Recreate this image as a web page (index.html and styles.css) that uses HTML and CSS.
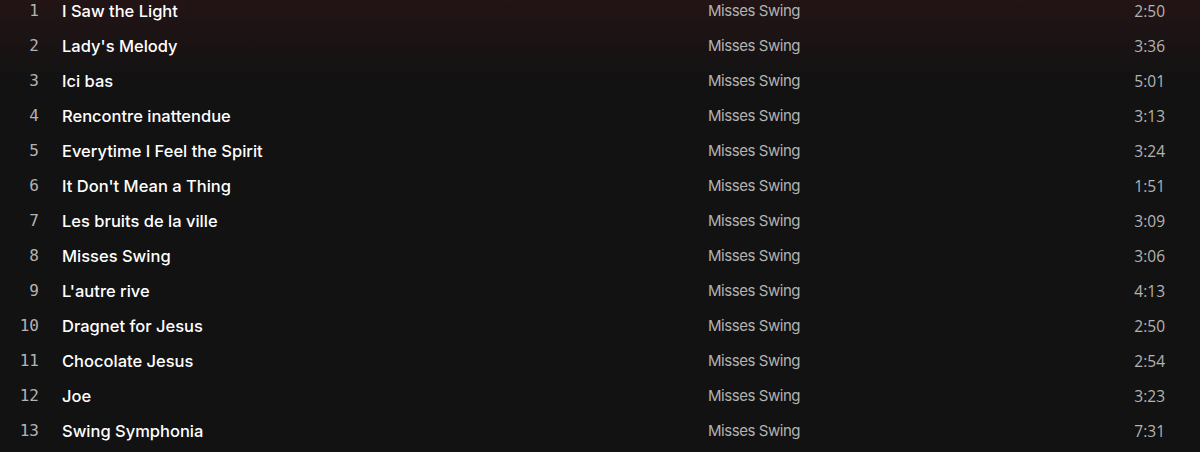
FILE: index.html
```html
<!DOCTYPE html>
<html lang="en">
<head>
<meta charset="utf-8">
<title>Tracklist</title>
<link rel="stylesheet" href="styles.css">
</head>
<body>
<main class="page">
  <ol class="tracklist">
    <li class="row"><span class="num">1</span><span class="title">I Saw the Light</span><span class="artist">Misses Swing</span><span class="dur">2:50</span></li>
    <li class="row"><span class="num">2</span><span class="title">Lady's Melody</span><span class="artist">Misses Swing</span><span class="dur">3:36</span></li>
    <li class="row"><span class="num">3</span><span class="title">Ici bas</span><span class="artist">Misses Swing</span><span class="dur">5:01</span></li>
    <li class="row"><span class="num">4</span><span class="title">Rencontre inattendue</span><span class="artist">Misses Swing</span><span class="dur">3:13</span></li>
    <li class="row"><span class="num">5</span><span class="title">Everytime I Feel the Spirit</span><span class="artist">Misses Swing</span><span class="dur">3:24</span></li>
    <li class="row"><span class="num">6</span><span class="title">It Don't Mean a Thing</span><span class="artist">Misses Swing</span><span class="dur">1:51</span></li>
    <li class="row"><span class="num">7</span><span class="title">Les bruits de la ville</span><span class="artist">Misses Swing</span><span class="dur">3:09</span></li>
    <li class="row"><span class="num">8</span><span class="title">Misses Swing</span><span class="artist">Misses Swing</span><span class="dur">3:06</span></li>
    <li class="row"><span class="num">9</span><span class="title">L'autre rive</span><span class="artist">Misses Swing</span><span class="dur">4:13</span></li>
    <li class="row"><span class="num">10</span><span class="title">Dragnet for Jesus</span><span class="artist">Misses Swing</span><span class="dur">2:50</span></li>
    <li class="row"><span class="num">11</span><span class="title">Chocolate Jesus</span><span class="artist">Misses Swing</span><span class="dur">2:54</span></li>
    <li class="row"><span class="num">12</span><span class="title">Joe</span><span class="artist">Misses Swing</span><span class="dur">3:23</span></li>
    <li class="row"><span class="num">13</span><span class="title">Swing Symphonia</span><span class="artist">Misses Swing</span><span class="dur">7:31</span></li>
  </ol>
</main>
</body>
</html>
```

FILE: styles.css
```css
html, body {
  margin: 0;
  padding: 0;
  height: 100%;
  overflow: hidden;
}
body {
  background: linear-gradient(to bottom, #231415 0px, #1b1314 40px, #131212 75px, #121212 100%);
  color: #fff;
  font-family: "Inter", "Liberation Sans", sans-serif;
}
.page {
  width: 1200px;
}
.tracklist {
  list-style: none;
  margin: -7px 0 0 0;
  padding: 0;
}
.row {
  display: grid;
  grid-template-columns: 40px 668px 1fr 80px;
  align-items: center;
  height: 35px;
  padding-right: 35px;
}
.num {
  font-family: "DejaVu Sans Mono", "Liberation Mono", monospace;
  font-size: 16px;
  color: #b3b3b3;
  text-align: right;
  padding-right: 1px;
}
.title {
  padding-left: 22px;
  font-size: 16.5px;
  font-weight: 500;
  color: #ffffff;
  white-space: nowrap;
}
.artist {
  font-size: 15px;
  letter-spacing: -0.45px;
  color: #b3b3b3;
  white-space: nowrap;
}
.dur {
  font-family: "Open Sans", "Liberation Sans", sans-serif;
  font-size: 15.5px;
  color: #b3b3b3;
  text-align: right;
}
```
